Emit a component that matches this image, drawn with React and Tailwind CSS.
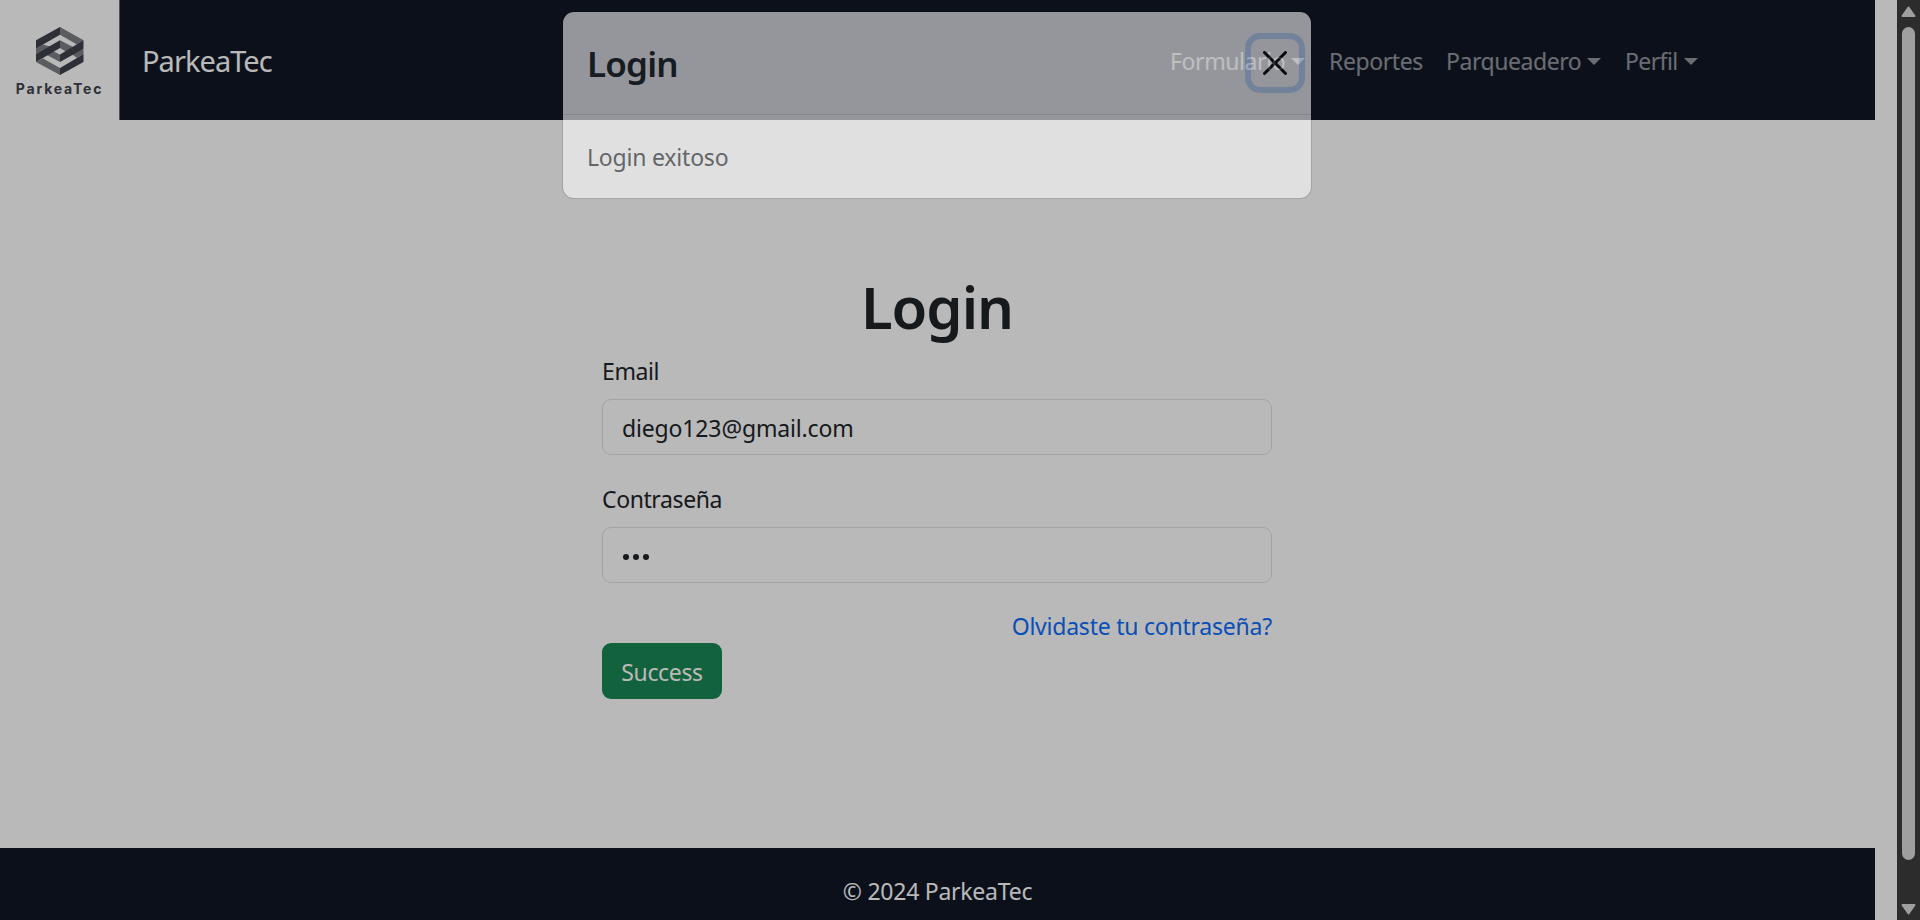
import React from "react";

function Logo() {
  return (
    <div className="flex h-[120px] w-[120px] shrink-0 flex-col items-center border-r border-[#6b7280] bg-white pt-[27px]">
      <svg className="h-[48px] w-[48px]" viewBox="0 0 48 48">
        <g fill="#7d7f85">
          <path d="M24 0 L47.500 13.300 L41 17.500 L24 7.700Z" />
          <path d="M0 21.700 L7 17.500 L14 19.500 L0 27Z" />
          <path d="M47.500 27 L47.500 22 L35 26.500 L41 31Z" />
          <path d="M24 13.300 L38 20.500 L30.500 25 L24 21Z" />
          <path d="M17 24 L24 27.800 V35 L10 27.500Z" />
          <path d="M7 31.500 L24 41 V48 L0 35Z" />
        </g>
        <g fill="#3f434d">
          <path d="M0 13.300 L24 0 V7.700 L7 17.500 L0 21.700Z" />
          <path d="M0 27 L24 13.300 V21 L7 31 L0 35Z" />
          <path d="M47.500 13.300 V21.700 L24 35 V27.500Z" />
          <path d="M47.500 27 V35 L24 48 V41 L41 31Z" />
        </g>
      </svg>
      <span className="mt-[5px] text-[14px] leading-[18px] font-['Inter',sans-serif] font-bold tracking-[1.8px] text-[#3f434d]">
        ParkeaTec
      </span>
    </div>
  );
}

function Caret() {
  return (
    <span className="mt-[-1px] h-0 w-0 border-x-[7px] border-t-[7px] border-x-transparent border-t-white/55" />
  );
}

function NavLink({ children, width, caret }) {
  return (
    <a className="flex items-center gap-[7px] px-3 text-[23px] text-white/55">
      <span className={"whitespace-nowrap " + width}>{children}</span>
      {caret && <Caret />}
    </a>
  );
}

function Navbar() {
  return (
    <nav className="flex h-[120px] w-[1875px] items-center bg-[#111726]">
      <Logo />
      <span className="ml-[22px] pt-[2px] text-[29px] tracking-[-0.95px] text-white">ParkeaTec</span>
      <div className="mr-[165px] ml-auto flex pt-[3px]">
        <NavLink width="w-[114px] tracking-[-0.4px]" caret>Formulario</NavLink>
        <NavLink width="w-[93px] tracking-[-0.4px]">Reportes</NavLink>
        <NavLink width="w-[134px] tracking-[-0.45px]" caret>Parqueadero</NavLink>
        <NavLink width="w-[52px] tracking-[-0.6px]" caret>Perfil</NavLink>
      </div>
    </nav>
  );
}

function LoginForm() {
  return (
    <form className="ml-[602px] flex w-[670px] flex-col text-[23px] text-[#212529]">
      <h1 className="text-center text-[58px] leading-[72px] font-semibold tracking-[-1px]">Login</h1>
      <label className="mt-[10px] mb-[10px] leading-[36px] tracking-[-0.4px]">Email</label>
      <div className="flex h-[56px] items-center rounded-[9px] border border-[#dee2e6] px-[19px] pt-[3px] tracking-[-0.15px]">
        diego123@gmail.com
      </div>
      <label className="mt-[26px] mb-[10px] leading-[36px] tracking-[-0.4px]">Contraseña</label>
      <div className="flex h-[56px] items-center gap-[4px] rounded-[9px] border border-[#dee2e6] px-[20px] pt-[3px]">
        <span className="h-[6px] w-[6px] rounded-full bg-[#212529]" />
        <span className="h-[6px] w-[6px] rounded-full bg-[#212529]" />
        <span className="h-[6px] w-[6px] rounded-full bg-[#212529]" />
      </div>
      <a className="mt-[26px] self-end leading-[34px] tracking-[-0.23px] text-[#0d6efd]">Olvidaste tu contraseña?</a>
      <button type="button" className="flex h-[56px] w-[120px] items-center justify-center rounded-[9px] bg-[#198754] pt-[2px] tracking-[-0.35px] text-white">
        Success
      </button>
    </form>
  );
}

function LoginModal() {
  return (
    <div className="absolute top-[11px] left-[562px] flex h-[188px] w-[750px] flex-col rounded-[12px] border border-black/20 bg-white bg-clip-padding text-[#212529] opacity-[0.56]">
      <header className="flex h-[103px] shrink-0 items-center justify-between border-b border-[#dee2e6] pr-[12px] pl-6">
        <h4 className="pt-[3px] text-[35px] font-semibold tracking-[-0.8px]">Login</h4>
        <button type="button" className="mb-[1px] flex h-[48px] w-[48px] items-center justify-center rounded-[9px] shadow-[0_0_0_6px_rgba(13,110,253,0.25)]">
          <svg className="h-6 w-6" viewBox="0 0 16 16" fill="#000">
            <path d="M.293.293a1 1 0 0 1 1.414 0L8 6.586 14.293.293a1 1 0 1 1 1.414 1.414L9.414 8l6.293 6.293a1 1 0 0 1-1.414 1.414L8 9.414l-6.293 6.293a1 1 0 0 1-1.414-1.414L6.586 8 .293 1.707a1 1 0 0 1 0-1.414z" />
          </svg>
        </button>
      </header>
      <p className="px-6 pt-6 text-[23px] leading-[36px] tracking-[-0.2px]">Login exitoso</p>
    </div>
  );
}

function Scrollbar() {
  return (
    <div className="flex w-[23px] flex-col items-center bg-[#2c2c2c] pt-[6px] pb-[5px]">
      <svg className="h-[11px] w-[15px] shrink-0" viewBox="0 0 15 11">
        <path d="M7.500 1.500 L13.500 10 H1.500Z" fill="#9f9f9f" stroke="#9f9f9f" strokeWidth="2" strokeLinejoin="round" />
      </svg>
      <div className="mt-[10px] mb-[44px] w-[13px] flex-1 rounded-full bg-[#9f9f9f]" />
      <svg className="h-[11px] w-[15px] shrink-0" viewBox="0 0 15 11">
        <path d="M7.500 9.500 L13.500 1 H1.500Z" fill="#9f9f9f" stroke="#9f9f9f" strokeWidth="2" strokeLinejoin="round" />
      </svg>
    </div>
  );
}

export default function App() {
  return (
    <div className="flex h-[920px] w-[1920px] overflow-hidden font-['Noto_Sans',sans-serif]">
      <div className="relative flex w-[1897px] flex-col bg-white">
        <Navbar />
        <main className="h-[728px] pt-[151px]">
          <LoginForm />
        </main>
        <footer className="flex w-[1875px] flex-1 items-center justify-center bg-[#111726] pt-[14px] text-[23px] tracking-[-0.25px] text-white">
          © 2024 ParkeaTec
        </footer>
        <div className="absolute inset-0 bg-black/[0.275]" />
        <LoginModal />
      </div>
      <Scrollbar />
    </div>
  );
}
